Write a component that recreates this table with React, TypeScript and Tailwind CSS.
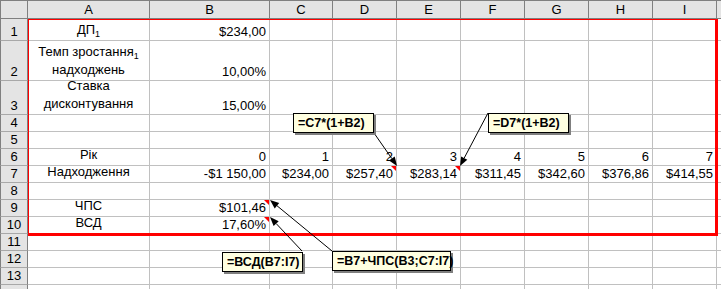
import React from "react";

const COLS = ["A", "B", "C", "D", "E", "F", "G", "H", "I"];

type Row = {
  n: number;
  label?: React.ReactNode;
  values?: string[];
  flags?: number[];
};

const Sub = () => <span className="relative top-[3px] text-[9px] leading-none">1</span>;

const ROWS: Row[] = [
  { n: 1, label: <>ДП<Sub /></>, values: ["$234,00"] },
  { n: 2, label: <>Темп зростання<Sub /><br />надходжень</>, values: ["10,00%"] },
  { n: 3, label: <>Ставка<br />дисконтування</>, values: ["15,00%"] },
  { n: 4 },
  { n: 5 },
  { n: 6, label: "Рік", values: ["0", "1", "2", "3", "4", "5", "6", "7"] },
  {
    n: 7,
    label: "Надходження",
    values: ["-$1 150,00", "$234,00", "$257,40", "$283,14", "$311,45", "$342,60", "$376,86", "$414,55"],
    flags: [2, 3],
  },
  { n: 8 },
  { n: 9, label: "ЧПС", values: ["$101,46"], flags: [0] },
  { n: 10, label: "ВСД", values: ["17,60%"], flags: [0] },
  { n: 11 },
  { n: 12 },
  { n: 13 },
  { n: 14 },
];

const ARROWS = [
  [374, 133, 397, 166],
  [488, 113, 460, 166],
  [302, 251, 270, 217],
  [332, 251, 270, 200],
];

const NOTES = [
  { text: "=C7*(1+B2)", cls: "left-[293px] top-[113px] w-[81px]" },
  { text: "=D7*(1+B2)", cls: "left-[488px] top-[113px] w-[81px]" },
  { text: "=ВСД(B7:I7)", cls: "left-[222px] top-[252px] w-[81px]" },
  { text: "=B7+ЧПС(B3;C7:I7)", cls: "left-[332px] top-[251px] w-[119px]" },
];

function Arrow({ x1, y1, x2, y2 }: { x1: number; y1: number; x2: number; y2: number }) {
  const dx = x2 - x1;
  const dy = y2 - y1;
  const len = Math.hypot(dx, dy);
  const ux = dx / len;
  const uy = dy / len;
  const head = 9;
  const w = 3.5;
  const bx = x2 - ux * head;
  const by = y2 - uy * head;
  const pts = [
    `${x2},${y2}`,
    `${bx - uy * w},${by + ux * w}`,
    `${bx + uy * w},${by - ux * w}`,
  ].join(" ");
  return (
    <g>
      <line x1={x1} y1={y1} x2={bx} y2={by} stroke="#000" strokeWidth={1} />
      <polygon points={pts} fill="#000" />
    </g>
  );
}

function Flag() {
  return (
    <span className="absolute right-0 top-0 h-0 w-0 border-l-[5px] border-t-[5px] border-l-transparent border-t-[#ff0000]" />
  );
}

export default function App() {
  return (
    <div className="relative h-[289px] w-[721px] overflow-hidden bg-white text-[13px] text-black [font-family:'Liberation_Sans',Arial,sans-serif]">
      <div className="grid grid-cols-[28px_122px_120px_63px_repeat(6,64px)_1fr] grid-rows-[19px_22px_40px_34px_repeat(11,17px)]">
        {/* column headers */}
        <div className="border-l border-t border-r border-b border-[#808080] bg-[#e4e4e4]" />
        {COLS.map((c) => (
          <div
            key={c}
            className="flex items-center justify-center border-t border-r border-b border-[#808080] bg-[#e4e4e4] leading-none"
          >
            {c}
          </div>
        ))}
        <div className="border-t border-b border-[#808080] bg-[#e4e4e4]" />

        {ROWS.map((row) => (
          <React.Fragment key={row.n}>
            <div className="flex items-end justify-center overflow-hidden border-l border-l-[#808080] border-r border-r-[#808080] border-b border-b-[#a8a8a8] bg-[#e4e4e4] pb-[1px] leading-[15px]">
              {row.n < 14 ? row.n : null}
            </div>
            <div className="flex items-end justify-center border-r border-b border-[#c0c0c0] pb-[1px] text-center">
              <span className="whitespace-nowrap leading-[18px]">{row.label}</span>
            </div>
            {COLS.slice(1).map((c, i) => (
              <div
                key={c}
                className="relative flex items-end justify-end border-r border-b border-[#c0c0c0] pr-[3px] pb-[1px] leading-[15px]"
              >
                <span className="whitespace-nowrap">{row.values?.[i]}</span>
                {row.flags?.includes(i) && <Flag />}
              </div>
            ))}
            <div className="border-b border-[#c0c0c0]" />
          </React.Fragment>
        ))}
      </div>

      {/* selection outline */}
      <div className="pointer-events-none absolute left-[28px] top-[19px] h-[217px] w-[690px] border-l border-t border-r-[3px] border-b-[3px] border-[#ff0000]" />

      <svg className="pointer-events-none absolute inset-0" width={721} height={289} viewBox="0 0 721 289">
        {ARROWS.map(([x1, y1, x2, y2], i) => (
          <Arrow key={i} x1={x1} y1={y1} x2={x2} y2={y2} />
        ))}
      </svg>

      {NOTES.map((n) => (
        <div
          key={n.text}
          className={`absolute h-[20px] whitespace-nowrap border border-black bg-[#ffffe1] px-[4px] pt-[1px] text-[12.5px] font-bold leading-[16px] shadow-[2px_2px_0_#7f7f7f] ${n.cls}`}
        >
          {n.text}
        </div>
      ))}
    </div>
  );
}
